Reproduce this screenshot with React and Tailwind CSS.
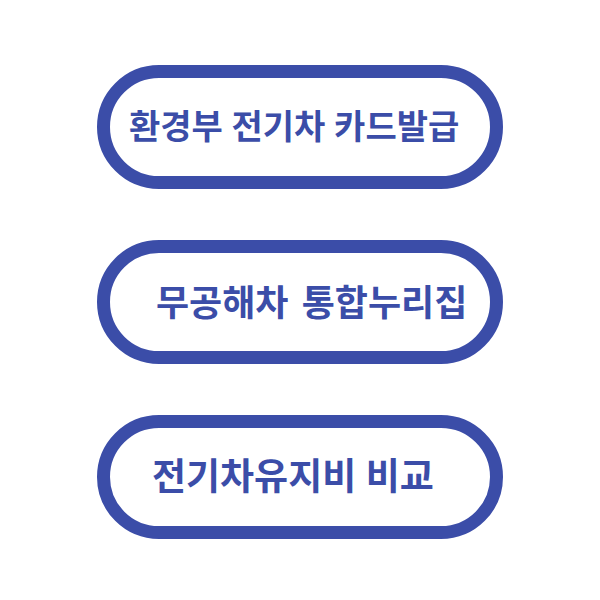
const buttons = [
  { label: "환경부 전기차 카드발급", cls: "pl-[19px] text-[34px] [word-spacing:1px]" },
  { label: "무공해차 통합누리집", cls: "pl-[46px] text-[36px] [word-spacing:5px]" },
  { label: "전기차유지비 비교", cls: "pl-[42px] text-[37px] [word-spacing:1px]" },
];

export default function App() {
  return (
    <div className="w-[600px] h-[600px] bg-white flex flex-col items-center pt-[65px] gap-[51px]">
      {buttons.map(({ label, cls }) => (
        <button
          key={label}
          className={`w-[406px] h-[124px] rounded-full border-[13px] border-[#3b4da8] bg-white flex items-center pb-[5px] ${cls}`}
        >
          <span
            className="font-bold text-[#3b4da8] whitespace-pre leading-none"
            style={{ fontFamily: '"Noto Sans CJK KR", "Noto Sans", sans-serif' }}
          >
            {label}
          </span>
        </button>
      ))}
    </div>
  );
}
